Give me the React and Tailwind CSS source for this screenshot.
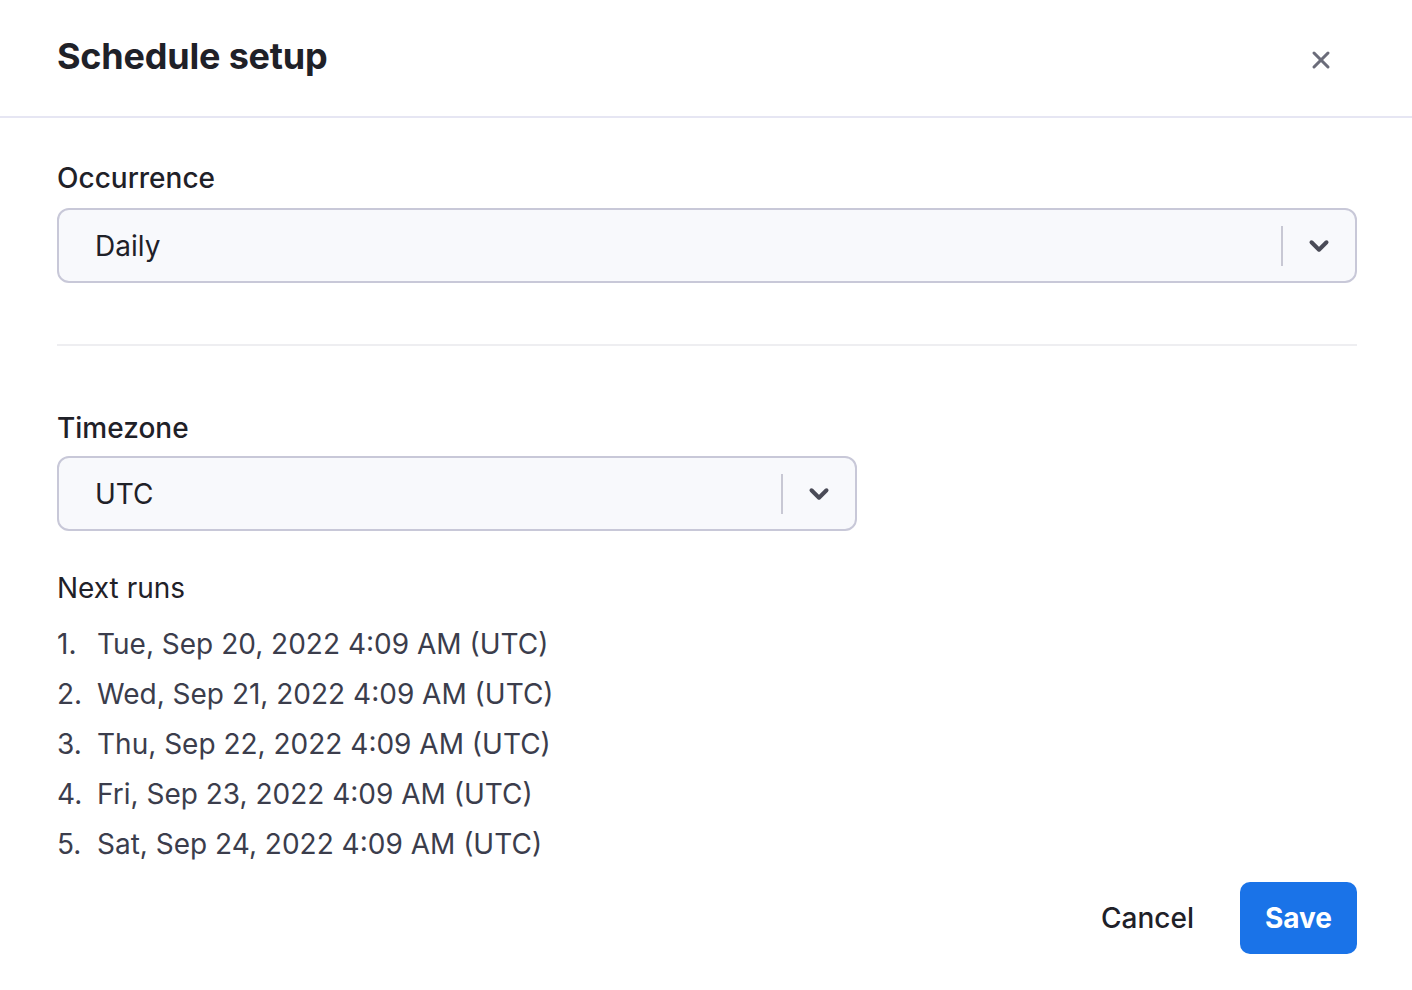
import { X, ChevronDown } from "lucide-react";

const runs = [
  "Tue, Sep 20, 2022 4:09 AM (UTC)",
  "Wed, Sep 21, 2022 4:09 AM (UTC)",
  "Thu, Sep 22, 2022 4:09 AM (UTC)",
  "Fri, Sep 23, 2022 4:09 AM (UTC)",
  "Sat, Sep 24, 2022 4:09 AM (UTC)",
];

function Select({ value, className }) {
  return (
    <div
      className={
        "flex h-[75px] items-center rounded-[12px] border-2 border-[#c8c8d8] bg-[#f8f9fc] " +
        className
      }
    >
      <span className="flex-1 pl-[36px] text-[28px] text-[#1f2128]">{value}</span>
      <div className="h-[40px] w-[2px] bg-[#c8c8d4]" />
      <div className="flex w-[72px] items-center justify-center">
        <ChevronDown className="h-[30px] w-[30px] text-[#4a4b57]" strokeWidth={3.2} />
      </div>
    </div>
  );
}

export default function App() {
  return (
    <div
      className="h-[990px] w-[1412px] bg-white"
      style={{ fontFamily: "Inter, 'Noto Sans', sans-serif" }}
    >
      <div className="flex h-[118px] items-center justify-between border-b-2 border-[#e6e6f3] pl-[57px] pr-[77px]">
        <h1 className="mb-[4px] text-[36px] font-bold tracking-[-0.2px] text-[#1f2128]">
          Schedule setup
        </h1>
        <X className="mt-[4px] h-[28px] w-[28px] text-[#6b6c7a]" strokeWidth={2.6} />
      </div>

      <div className="pl-[57px] pr-[55px]">
        <div className="mt-[42px] text-[28px] font-medium leading-[36px] text-[#1f2128]">
          Occurrence
        </div>
        <Select value="Daily" className="mt-[12px] w-full" />

        <div className="mt-[61px] h-[2px] bg-[#eeeef1]" />

        <div className="mt-[64px] text-[28px] font-medium leading-[36px] text-[#1f2128]">
          Timezone
        </div>
        <Select value="UTC" className="mt-[10px] w-[800px]" />

        <div className="mt-[39px] text-[28px] leading-[36px] text-[#1f2128]">Next runs</div>
        <ol className="mt-[13px] text-[28px] leading-[50px] text-[#3b3d4c]">
          {runs.map((r, i) => (
            <li key={r} className="flex">
              <span className="w-[40px]">{i + 1}.</span>
              <span>{r}</span>
            </li>
          ))}
        </ol>

        <div className="mt-[13px] flex items-center justify-end gap-[46px]">
          <button className="text-[28px] font-medium text-[#1f2128]">Cancel</button>
          <button className="h-[72px] w-[117px] rounded-[10px] bg-[#1a73e8] text-[28px] font-bold text-white">
            Save
          </button>
        </div>
      </div>
    </div>
  );
}
